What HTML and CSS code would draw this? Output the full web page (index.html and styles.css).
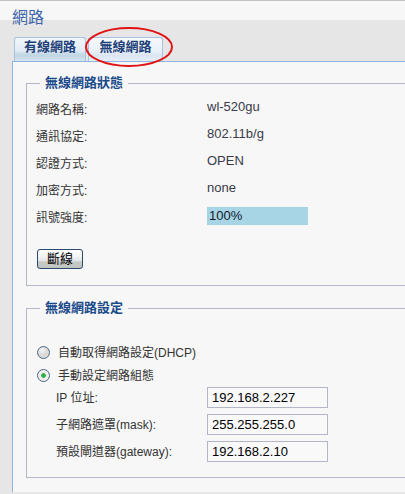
FILE: index.html
```html
<!DOCTYPE html>
<html lang="zh-Hant">
<head>
    <meta charset="UTF-8">
    <meta name="viewport" content="width=device-width, initial-scale=1.0">
    <title>網路</title>
    <link rel="stylesheet" href="styles.css">
</head>
<body>
    <div class="window">
        <h1 class="title">網路</h1>

        <div class="tabs">
            <div class="tab tab-wired">有線網路</div>
            <div class="tab tab-wireless">無線網路</div>
        </div>

        <div class="panel">
            <!-- status -->
            <fieldset class="group group-status">
                <legend class="group-title">無線網路狀態</legend>
                <div class="row"><span class="label">網路名稱:</span><span class="value">wl-520gu</span></div>
                <div class="row"><span class="label">通訊協定:</span><span class="value">802.11b/g</span></div>
                <div class="row"><span class="label">認證方式:</span><span class="value">OPEN</span></div>
                <div class="row"><span class="label">加密方式:</span><span class="value">none</span></div>
                <div class="row"><span class="label">訊號強度:</span><span class="signal" style="width: 100%;">100%</span></div>
                <button class="btn">斷線</button>
            </fieldset>

            <!-- settings -->
            <fieldset class="group group-settings">
                <legend class="group-title">無線網路設定</legend>
                <div class="options">
                    <div class="option"><span class="radio"></span>自動取得網路設定(DHCP)</div>
                    <div class="option"><span class="radio checked"></span>手動設定網路組態</div>
                </div>
                <div class="fields">
                    <div class="field"><span class="field-label">IP 位址:</span><span class="input">192.168.2.227</span></div>
                    <div class="field"><span class="field-label">子網路遮罩(mask):</span><span class="input">255.255.255.0</span></div>
                    <div class="field"><span class="field-label">預設閘道器(gateway):</span><span class="input">192.168.2.10</span></div>
                </div>
            </fieldset>
        </div>
    </div>

    <svg class="mark" width="90" height="42" viewBox="0 0 90 42">
        <ellipse cx="44" cy="20" rx="43" ry="19" fill="none" stroke="#e01414" stroke-width="2"/>
    </svg>
</body>
</html>
```

FILE: styles.css
```css
html, body {
    margin: 0;
    padding: 0;
    overflow: hidden;
}

body {
    background-color: #e6e6e6;
    font-family: "Liberation Sans", "Noto Sans CJK TC", sans-serif;
    color: #333;
    position: relative;
}

.window {
    border-top: 1px solid #c3c3c3;
    background: linear-gradient(#f7f7f7 0, #f7f7f7 19px, #e6e6e6 19px);
    padding-left: 12px;
    min-height: 493px;
}

.title {
    margin: 0;
    padding-top: 7px;
    height: 20px;
    line-height: 20px;
    font-size: 16px;
    font-weight: normal;
    color: #3b64a8;
}

/* tabs */

.tabs {
    display: flex;
    gap: 2px;
    margin-top: 9px;
    padding-left: 2px;
    height: 24px;
}

.tab {
    height: 23px;
    border: 1px solid #a9c2e2;
    border-bottom: none;
    border-radius: 3px 3px 0 0;
    font-size: 13px;
    font-weight: bold;
    line-height: 18px;
    text-align: center;
    color: #1e4178;
}

.tab-wired {
    width: 70px;
    background: linear-gradient(#f2f6fb 0, #e2ebf6 55%, #c9dae9 68%, #bfd6e2 78%, #d8e5f2 100%);
}

.tab-wireless {
    width: 73px;
    background: linear-gradient(#f7f9fc 0, #eaf1f9 55%, #dbe6f2 75%, #e6eef7 100%);
}

/* panel */

.panel {
    border-top: 1px solid #8db5e0;
    border-left: 1px solid #8db5e0;
    background-color: #f7f7f7;
    padding: 13px 0 14px 13px;
    min-height: 400px;
}

.group {
    margin: 0;
    min-width: 0;
    border: 1px solid #b5b7ca;
    border-right: none;
    padding: 5px 0 0 9px;
}

.group-title {
    margin-left: 4px;
    padding: 0 5px;
    line-height: 16px;
    font-size: 13px;
    font-weight: bold;
    color: #1a4a8a;
}

.group-status {
    padding-bottom: 16px;
}

.group-settings {
    margin-top: 14px;
    padding-bottom: 15px;
}

.row {
    display: flex;
    align-items: center;
    height: 27px;
}

.label {
    width: 171px;
    font-size: 12px;
    line-height: 16px;
}

.value {
    font-size: 13px;
    line-height: 16px;
    color: #3a3a48;
    margin-bottom: 5px;
}

.signal {
    display: block;
    max-width: 99px;
    height: 18px;
    padding-left: 2px;
    line-height: 18px;
    font-size: 13px;
    color: #101828;
    background-color: #a8d5e6;
    margin-bottom: 3px;
}

.btn {
    display: block;
    margin: 18px 0 0 1px;
    width: 46px;
    height: 20px;
    padding: 0;
    border: 1px solid #2c4a6e;
    border-radius: 3px;
    background: linear-gradient(#ffffff 0, #f2f3f5 35%, #e2e4ea 60%, #c6cac6 66%, #c2c6c2 100%);
    font-family: "Liberation Sans", "Noto Sans CJK TC", sans-serif;
    font-size: 13px;
    line-height: 16px;
    color: #000;
}

/* settings */

.options {
    margin-top: 20px;
}

.option {
    display: flex;
    align-items: center;
    height: 23px;
    font-size: 12px;
    line-height: 16px;
}

.radio {
    width: 11px;
    height: 11px;
    margin: 0 8px 0 1px;
    border: 1px solid #4a6684;
    border-radius: 50%;
    background: radial-gradient(circle at 35% 30%, #f2f2f2 0, #d6d6d6 55%, #ececec 100%);
}

.radio.checked {
    background: radial-gradient(circle, #2fae4a 0, #2fae4a 2px, #e9ece9 2.6px, #f6f6f6 100%);
}

.fields {
    display: flex;
    flex-direction: column;
    gap: 6px;
}

.field {
    display: flex;
    align-items: center;
    padding-left: 20px;
}

.field-label {
    width: 151px;
    font-size: 12px;
    line-height: 16px;
}

.input {
    box-sizing: border-box;
    width: 121px;
    height: 21px;
    padding-left: 4px;
    border: 1px solid #b3b5c8;
    background-color: #f9f9f9;
    font-size: 13px;
    line-height: 19px;
    color: #000;
}

/* red marker round the second tab */

.mark {
    position: absolute;
    left: 85px;
    top: 27px;
}
```
